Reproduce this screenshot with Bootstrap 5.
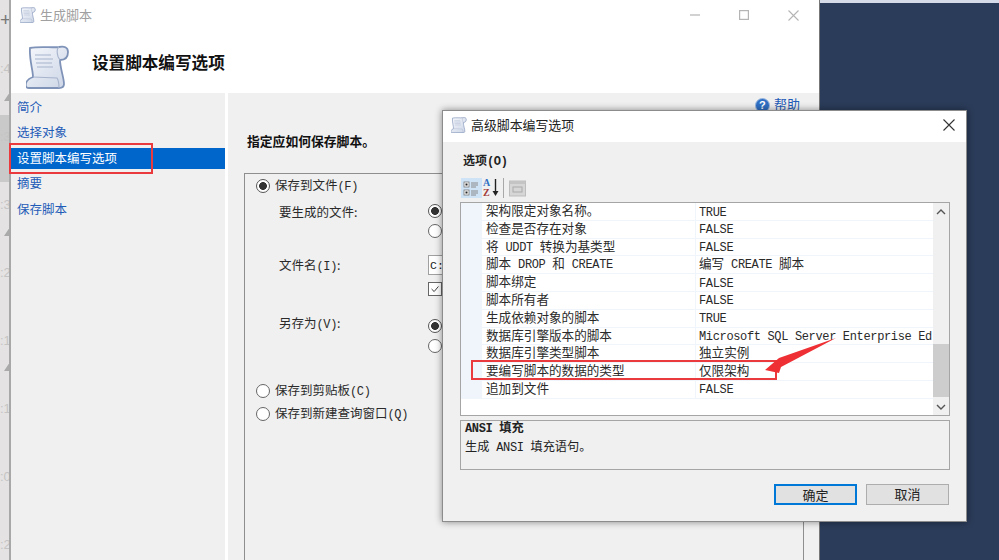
<!DOCTYPE html>
<html lang="zh-CN">
<head>
<meta charset="utf-8">
<title>生成脚本</title>
<link rel="stylesheet" href="https://cdn.jsdelivr.net/npm/bootstrap@5.3.0/dist/css/bootstrap.min.css">
<style>
html,body{margin:0;padding:0;}
body{width:999px;height:560px;overflow:hidden;background:#2b3c5a;position:relative;font-family:"Noto Sans CJK SC","Liberation Sans",sans-serif;font-size:12.5px;line-height:20px;color:#2a2a2a;}
.lat{font-family:"Liberation Mono",monospace;font-size:12px;letter-spacing:-.35px;}
.stage{height:560px;}
.strip{width:11px;flex:none;background:#e4e2e2;border-right:2px solid #a8a8a8;overflow:hidden;position:relative;color:#c4c4c4;font:13px/68px "Liberation Sans",sans-serif;}
.strip-top{height:35px;line-height:40px;color:#777;font-size:19px;position:relative;}
.strip-item{height:68px;white-space:nowrap;position:relative;}
.strip-sel{position:absolute;left:0;right:0;top:115px;height:67px;background:#c9c9c9;}
.strip-x{position:absolute;left:4px;width:0;height:0;border-left:6px solid transparent;border-right:3px solid transparent;border-bottom:9px solid #aaa;}
.win{width:809px;flex:none;background:#fff;border-right:1px solid #777;}
.win-title{height:32px;padding-left:9px;padding-bottom:2px;color:#a0a0a0;font-size:13px;}
.win-ctl{margin-left:auto;padding-right:20px;gap:39px;}
.win-head{height:61px;padding-left:15px;padding-top:8px;}
.win-head-text{font-size:16.6px;font-weight:700;color:#111;margin-left:22px;margin-top:-10px;}
.win-body{height:467px;}
.side{width:214px;flex:none;background:#f0f0f0;padding-top:1.5px;}
.side-item{height:25.5px;line-height:23.5px;padding-left:6px;color:#1f5cb8;}
.side-active{height:21px;line-height:19px;margin:2.25px 0;background:#0066cc;color:#fff;}
.pane{margin-left:3px;flex:1;min-width:0;background:#f0f0f0;padding-left:16px;overflow:hidden;}
.pane-top{height:22px;line-height:22px;padding-right:19px;color:#1f5cb8;font-size:13px;gap:4px;}
.help-dot{width:15px;height:15px;border-radius:50%;background:#2f6fc4;border:1px solid #9db9e0;color:#fff;font:700 11px/13px "Liberation Sans",sans-serif;text-align:center;margin-top:5px;}
.pane-ask{margin:16px 0 22px 3px;font-weight:700;font-size:12.8px;color:#111;}
.grp{height:420px;margin-right:15px;border:1px solid #8e8e8e;padding:2px 0 0 11px;position:relative;}
.opt{height:20px;gap:5px;white-space:nowrap;}
.form-check-input.rd{width:14px;height:14px;margin:0;flex:none;border:1px solid #666;background:#fff;opacity:1;}
.form-check-input.rd:checked{background-image:radial-gradient(circle,#333 0 3.6px,transparent 4.2px);background-color:#fff;border-color:#555;}
.form-check-input.ck{width:14px;height:14px;margin:0;flex:none;border:1px solid #666;border-radius:0;background-color:#fff;}
.form-check-input.ck:checked{background-color:#fff;border-color:#666;background-image:url("data:image/svg+xml,%3Csvg xmlns='http://www.w3.org/2000/svg' viewBox='0 0 14 14'%3E%3Cpath d='M3 7l3 3 5-6' fill='none' stroke='%23333' stroke-width='1.1'/%3E%3C/svg%3E");}
.sub{margin-left:23px;display:grid;grid-template-columns:149px 1fr;}
.sub1{margin-top:5px;}
.sub2{margin-top:14px;}
.sub3{margin-top:17px;}
.sub-lab1{padding-top:1px;}
.sub-lab3{margin-top:-3px;}
.txt-in{height:20px;border:1px solid #a0a0a0;border-radius:0;background:#fff;font:11.5px/18px "Liberation Mono",monospace;padding:0 1px;width:360px;color:#222;}
.opt-a{margin-top:25px;}
.opt-b{margin-top:3px;}
.dlg{position:absolute;left:442px;top:110px;width:525px;height:412px;background:#f0f0f0;border:1px solid #8c8c8c;box-shadow:0 0 7px rgba(0,0,0,.45);}
.dlg-title{height:31px;background:#fff;padding-left:8px;padding-bottom:3px;font-size:12.9px;gap:4px;color:#222;}
.dlg-close{margin-left:auto;margin-right:11px;}
.dlg-label{margin:8px 0 0 20px;height:20px;font-weight:700;font-size:12px;color:#222;}
.tools{margin:8px 0 0 18px;height:20px;}
.tool{width:21px;height:20px;}
.tool-on{background:#cfe3f7;}
.tool-az{width:17px;position:relative;}
.tool-az b{position:absolute;left:1px;font:700 10px/10px "Liberation Serif",serif;}
.tool-sep{width:1px;height:20px;background:#a8a8a8;margin:0 5px 0 4px;}
.prop{margin:4px 16px 0 17px;height:214px;border:1px solid #a5a5a5;background:#fff;}
.prop-list{width:472px;flex:none;}
.prop-row{height:17.8px;line-height:14.5px;white-space:nowrap;font-size:12.6px;border-bottom:1px solid #f0f5fb;color:#2a2a2a;}
.prop-gut{width:21px;flex:none;background:#f0f5fb;}
.prop-name{width:214px;flex:none;padding-left:4px;border-right:1px solid #f0f5fb;}
.prop-val{padding-left:3px;flex:1;}
.prop-val.lat{padding-top:2.5px;}
.sbar{width:16px;flex:none;background:#f0f0f0;}
.sbar-btn{height:17px;}
.sbar-gap{height:124px;}
.sbar-thumb{height:53px;background:#cdcdcd;}
.sbar-fill{flex:1;}
.desc{margin:4px 16px 0 17px;height:50px;border:1px solid #a5a5a5;padding:0 4px;font-size:12.2px;line-height:17px;color:#222;}
.desc-h{font-weight:700;margin-top:-2px;}
.desc-h .lat{font-weight:700;}
.foot{margin:14px 17px 0 0;gap:9px;}
.btn.dbtn{width:83px;height:21px;padding:0 0 2px;border-radius:0;background:#e1e1e1;border:1px solid #adadad;color:#222;font-size:13px;line-height:17px;}
.btn.dbtn-main{border:2px solid #0078d7;}
.mark-box{position:absolute;border:2px solid #ea3a3d;pointer-events:none;}
.mark-a{left:9px;top:143px;width:144px;height:31px;}
.mark-b{left:471px;top:360px;width:306px;height:20px;}
.mark-arrow{position:absolute;left:760px;top:335px;width:80px;height:42px;}
.sky{flex:1;border-top:3px solid #d5dbe8;}
</style>
</head>
<body>
<svg width="0" height="0" class="position-absolute">
  <defs>
    <linearGradient id="scrollFill" x1="0" y1="0" x2="1" y2="1">
      <stop offset="0" stop-color="#f6f8fc"/><stop offset="1" stop-color="#ccd5e6"/>
    </linearGradient>
    <symbol id="scroll" viewBox="0 0 44 44">
      <path d="M4 3C14 1 26 3 33 2c5-1 9 0 9 5 0 5-3 8-8 8 0 8 4 18 4 24 0 3-2 4-5 4H3c-2 0-4-1-3-5 1-3 4-5 7-6C7 25 3 14 4 3z" fill="url(#scrollFill)" stroke="#7f93b8" stroke-width="1.8"/>
      <path d="M33 2c-3 2-2 10 1 13M7 32l24 1c2 3 2 7 2 10M9 10h16M9 14h18M10 18h16M11 22h16" fill="none" stroke="#a6b3cc" stroke-width="1.1"/>
    </symbol>
  </defs>
</svg>

<div class="stage d-flex">
  <div class="strip">
    <div class="strip-sel"></div>
    <div class="strip-top">+</div>
    <div class="strip-item">:4</div>
    <div class="strip-item">:3</div>
    <div class="strip-item">:3</div>
    <div class="strip-item">:2</div>
    <div class="strip-item">:1</div>
    <div class="strip-item">:1</div>
    <div class="strip-item">:0</div>
    <div class="strip-item">:2</div>
    <span class="strip-x" style="top:92px"></span>
    <span class="strip-x" style="top:227px"></span>
    <span class="strip-x" style="top:362px"></span>
  </div>

  <div class="win d-flex flex-column">
    <div class="win-title d-flex align-items-center gap-1">
      <svg width="16" height="16"><use href="#scroll"/></svg>
      <span>生成脚本</span>
      <div class="win-ctl d-flex align-items-center">
        <svg width="10" height="10" viewBox="0 0 10 10"><path d="M0 5h10" stroke="#b5b5b5" stroke-width="1.2"/></svg>
        <svg width="10" height="10" viewBox="0 0 10 10"><rect x=".6" y=".6" width="8.8" height="8.8" fill="none" stroke="#b5b5b5" stroke-width="1.2"/></svg>
        <svg width="11" height="11" viewBox="0 0 11 11"><path d="M.5.5l10 10M10.500.5l-10 10" stroke="#b5b5b5" stroke-width="1.1"/></svg>
      </div>
    </div>
    <div class="win-head d-flex align-items-center">
      <svg width="44" height="44"><use href="#scroll"/></svg>
      <span class="win-head-text">设置脚本编写选项</span>
    </div>
    <div class="win-body d-flex">
      <nav class="side">
        <div class="side-item">简介</div>
        <div class="side-item">选择对象</div>
        <div class="side-item side-active">设置脚本编写选项</div>
        <div class="side-item">摘要</div>
        <div class="side-item">保存脚本</div>
      </nav>
      <div class="pane">
        <div class="pane-top d-flex justify-content-end">
          <span class="help-dot">?</span><span>帮助</span>
        </div>
        <div class="pane-ask">指定应如何保存脚本。</div>
        <div class="grp">
          <label class="opt d-flex align-items-center"><input class="form-check-input rd" type="radio" name="g1" checked><span>保存到文件<span class="lat">(F)</span></span></label>
          <div class="sub sub1">
            <div class="sub-lab1">要生成的文件:</div>
            <div>
              <div class="opt d-flex align-items-center"><input class="form-check-input rd" type="radio" name="g2" checked></div>
              <div class="opt d-flex align-items-center"><input class="form-check-input rd" type="radio" name="g2"></div>
            </div>
          </div>
          <div class="sub sub2">
            <div>文件名<span class="lat">(I)</span>:</div>
            <div>
              <input class="form-control txt-in" type="text" value="C:" readonly>
              <div class="opt d-flex align-items-center mt-1"><input class="form-check-input ck" type="checkbox" checked></div>
            </div>
          </div>
          <div class="sub sub3">
            <div class="sub-lab3">另存为<span class="lat">(V)</span>:</div>
            <div>
              <div class="opt d-flex align-items-center"><input class="form-check-input rd" type="radio" name="g3" checked></div>
              <div class="opt d-flex align-items-center"><input class="form-check-input rd" type="radio" name="g3"></div>
            </div>
          </div>
          <label class="opt opt-a d-flex align-items-center"><input class="form-check-input rd" type="radio" name="g1"><span>保存到剪贴板<span class="lat">(C)</span></span></label>
          <label class="opt opt-b d-flex align-items-center"><input class="form-check-input rd" type="radio" name="g1"><span>保存到新建查询窗口<span class="lat">(Q)</span></span></label>
        </div>
      </div>
    </div>
  </div>
  <div class="sky"></div>
</div>

<div class="dlg d-flex flex-column">
  <div class="dlg-title d-flex align-items-center">
    <svg width="16" height="16"><use href="#scroll"/></svg>
    <span>高级脚本编写选项</span>
    <svg class="dlg-close" width="12" height="12" viewBox="0 0 12 12"><path d="M.5.5l11 11M11.500.5l-11 11" stroke="#333" stroke-width="1.1"/></svg>
  </div>
  <div class="dlg-label">选项<span class="lat fw-bold">(O)</span></div>
  <div class="tools d-flex">
    <div class="tool tool-on d-flex align-items-center justify-content-center">
      <svg width="17" height="17" viewBox="0 0 17 17">
        <rect x="1" y="2" width="5" height="5" fill="#fff" stroke="#777" stroke-width=".8"/><rect x="2.500" y="3.500" width="2" height="2" fill="#222"/>
        <rect x="1" y="10" width="5" height="5" fill="#fff" stroke="#777" stroke-width=".8"/><rect x="2.500" y="11.500" width="2" height="2" fill="#222"/>
        <path d="M8 3h7M8 5h7M8 7h5M8 11h7M8 13h7M8 15h5" stroke="#8a8a8a" stroke-width="1"/>
      </svg>
    </div>
    <div class="tool tool-az">
      <b style="top:0;color:#2f6fc4">A</b><b style="top:10px;color:#a33a3a">Z</b>
      <svg class="position-absolute" style="left:10px;top:1px" width="7" height="18" viewBox="0 0 7 18"><path d="M3.500 0v13" stroke="#222" stroke-width="1.4"/><path d="M.5 12h6l-3 5z" fill="#222"/></svg>
    </div>
    <div class="tool-sep"></div>
    <svg width="17" height="20" viewBox="0 0 17 20"><rect x=".5" y="3" width="16" height="15" fill="#d6d6d6" stroke="#bdbdbd"/><rect x=".5" y="3" width="16" height="3" fill="#c4c4c4"/><rect x="4" y="9" width="9" height="5" fill="none" stroke="#aaa"/></svg>
  </div>

  <div class="prop d-flex">
    <div class="prop-list">
      <div class="prop-row d-flex"><div class="prop-gut"></div><div class="prop-name">架构限定对象名称。</div><div class="prop-val lat">TRUE</div></div>
      <div class="prop-row d-flex"><div class="prop-gut"></div><div class="prop-name">检查是否存在对象</div><div class="prop-val lat">FALSE</div></div>
      <div class="prop-row d-flex"><div class="prop-gut"></div><div class="prop-name">将<span class="lat"> UDDT </span>转换为基类型</div><div class="prop-val lat">FALSE</div></div>
      <div class="prop-row d-flex"><div class="prop-gut"></div><div class="prop-name">脚本<span class="lat"> DROP </span>和<span class="lat"> CREATE</span></div><div class="prop-val">编写<span class="lat"> CREATE </span>脚本</div></div>
      <div class="prop-row d-flex"><div class="prop-gut"></div><div class="prop-name">脚本绑定</div><div class="prop-val lat">FALSE</div></div>
      <div class="prop-row d-flex"><div class="prop-gut"></div><div class="prop-name">脚本所有者</div><div class="prop-val lat">FALSE</div></div>
      <div class="prop-row d-flex"><div class="prop-gut"></div><div class="prop-name">生成依赖对象的脚本</div><div class="prop-val lat">TRUE</div></div>
      <div class="prop-row d-flex"><div class="prop-gut"></div><div class="prop-name">数据库引擎版本的脚本</div><div class="prop-val lat">Microsoft SQL Server Enterprise Ed</div></div>
      <div class="prop-row d-flex"><div class="prop-gut"></div><div class="prop-name">数据库引擎类型脚本</div><div class="prop-val">独立实例</div></div>
      <div class="prop-row d-flex"><div class="prop-gut"></div><div class="prop-name">要编写脚本的数据的类型</div><div class="prop-val">仅限架构</div></div>
      <div class="prop-row d-flex"><div class="prop-gut"></div><div class="prop-name">追加到文件</div><div class="prop-val lat">FALSE</div></div>
    </div>
    <div class="sbar d-flex flex-column">
      <div class="sbar-btn d-flex align-items-center justify-content-center"><svg width="10" height="6" viewBox="0 0 10 6"><path d="M1 5l4-4 4 4" fill="none" stroke="#555" stroke-width="1.4"/></svg></div>
      <div class="sbar-gap"></div>
      <div class="sbar-thumb"></div>
      <div class="sbar-fill"></div>
      <div class="sbar-btn d-flex align-items-center justify-content-center"><svg width="10" height="6" viewBox="0 0 10 6"><path d="M1 1l4 4 4-4" fill="none" stroke="#555" stroke-width="1.4"/></svg></div>
    </div>
  </div>

  <div class="desc">
    <div class="desc-h"><span class="lat">ANSI </span>填充</div>
    <div>生成<span class="lat"> ANSI </span>填充语句。</div>
  </div>

  <div class="foot d-flex justify-content-end">
    <button type="button" class="btn dbtn dbtn-main">确定</button>
    <button type="button" class="btn dbtn">取消</button>
  </div>
</div>

<div class="mark-box mark-a"></div>
<div class="mark-box mark-b"></div>
<svg class="mark-arrow" viewBox="760 335 80 42"><path d="M836 338L779 358 765 370 779 373 781 367z" fill="#ee2f33"/></svg>

<script src="https://cdn.jsdelivr.net/npm/bootstrap@5.3.0/dist/js/bootstrap.bundle.min.js"></script>
</body>
</html>
